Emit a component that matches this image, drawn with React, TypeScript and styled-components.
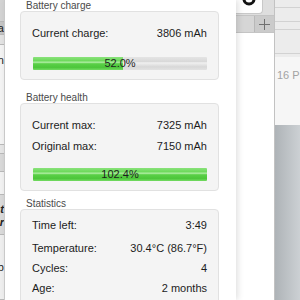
import React from 'react';
import styled, { createGlobalStyle } from 'styled-components';

const GlobalStyle = createGlobalStyle`
	html, body {
		margin: 0;
		padding: 0;
		background: #ffffff;
	}
`;

interface StatRow {
	label: string;
	value: string;
}

const stats: StatRow[] = [
	{ label: 'Time left:', value: '3:49' },
	{ label: 'Temperature:', value: '30.4°C (86.7°F)' },
	{ label: 'Cycles:', value: '4' },
	{ label: 'Age:', value: '2 months' },
];

const statGaps = [0, 9, 6, 6];

const ProgressBar = ({ percent, top }: { percent: number; top: number }) => (
	<Bar $mt={top}>
		<BarFill style={{ width: `${Math.min(percent, 100)}%` }} />
		<BarLabel>{percent.toFixed(1)}%</BarLabel>
	</Bar>
);

const App = () => {
	return (
		<>
			<GlobalStyle />
			<Page>
				<BackStrip>
					<StripCell $h={22} $bg="#d3d3d3" />
					<StripCell $h={13} $bg="#c5c5c5">Data</StripCell>
					<StripCell $h={10} $bg="#e3e3e3" />
					<StripCell $h={100} $bg="#f4f4f4" $pt={9}>
						Mon
					</StripCell>
					<StripCell $h={9} $bg="#e6e6e6" />
					<StripCell $h={18} $bg="#d9d9d9" />
					<StripCell $h={23} $bg="#f2f2f2" />
					<StripCell $h={40} $bg="#dadada" $pt={8} $italic>
						Last
						<br />
						Over
					</StripCell>
					<StripCell $h={65} $bg="#efefef" $pt={26}>
						Job
					</StripCell>
				</BackStrip>

				<Popover>
					<Section $mt={0}>
						<GroupTitle>Battery charge</GroupTitle>
						<GroupBox $pt={14}>
							<Row>
								<span>Current charge:</span>
								<span>3806 mAh</span>
							</Row>
							<ProgressBar percent={52.0} top={17} />
						</GroupBox>
					</Section>

					<Section $mt={12}>
						<GroupTitle>Battery health</GroupTitle>
						<GroupBox $pt={14}>
							<Row>
								<span>Current max:</span>
								<span>7325 mAh</span>
							</Row>
							<Row $mt={7}>
								<span>Original max:</span>
								<span>7150 mAh</span>
							</Row>
							<ProgressBar percent={102.4} top={15} />
						</GroupBox>
					</Section>

					<Section $mt={7}>
						<GroupTitle>Statistics</GroupTitle>
						<GroupBox $pt={8}>
							{stats.map((s, i) => (
								<Row key={s.label} $mt={statGaps[i]}>
									<span>{s.label}</span>
									<span>{s.value}</span>
								</Row>
							))}
						</GroupBox>
					</Section>
				</Popover>

				<RightPane>
					<MainCol>
						<TopStrip>
							<ToolButton>
								<svg width="16" height="10" viewBox="0 0 16 10">
									<circle cx="8" cy="-1" r="5" fill="none" stroke="#111" strokeWidth="3" />
								</svg>
							</ToolButton>
						</TopStrip>
						<TabBar>
							<AddTab>
								<svg width="11" height="11" viewBox="0 0 11 11">
									<path d="M5.5 0v11M0 5.5h11" stroke="#6f6f6f" strokeWidth="1" />
								</svg>
							</AddTab>
						</TabBar>
						<MainBody />
					</MainCol>
					<SideCol>
						<SideHead>
							<SideLine $h={7} />
							<SideLine $h={13} />
							<SideLine $h={7} />
							<SideLine $h={23} />
						</SideHead>
						<SideTime>16 PM</SideTime>
						<SideFoot />
					</SideCol>
				</RightPane>
			</Page>
		</>
	);
};

const Page = styled.div`
	display: flex;
	width: 300px;
	height: 300px;
	overflow: hidden;
	background: #ffffff;
	font-family: 'Liberation Sans', Arial, sans-serif;
`;

const BackStrip = styled.div`
	width: 4px;
	flex: none;
	display: flex;
	flex-direction: column;
	overflow: hidden;
	background: #ececec;
`;

const StripCell = styled.div<{ $h: number; $bg: string; $pt?: number; $italic?: boolean }>`
	height: ${(p) => p.$h}px;
	flex: none;
	box-sizing: border-box;
	padding-top: ${(p) => p.$pt || 0}px;
	background: ${(p) => p.$bg};
	border-bottom: 1px solid #b9b9b9;
	display: flex;
	justify-content: flex-end;
	font-size: 11px;
	line-height: 13px;
	font-style: ${(p) => (p.$italic ? 'italic' : 'normal')};
	font-weight: ${(p) => (p.$italic ? 'bold' : 'normal')};
	color: #222;
	white-space: nowrap;
	text-align: right;
`;

const Popover = styled.div`
	width: 232px;
	flex: none;
	box-sizing: border-box;
	padding: 0 17px 0 15px;
	background: #ffffff;
	border-left: 1px solid #c9c9c9;
	box-shadow: 2px 0 6px rgba(0, 0, 0, 0.12);
	position: relative;
	z-index: 1;
`;

const Section = styled.section<{ $mt: number }>`
	margin-top: ${(p) => p.$mt}px;
`;

const GroupTitle = styled.div`
	font-size: 10px;
	line-height: 11px;
	height: 11px;
	padding-left: 6px;
	color: #4a4a4a;
`;

const GroupBox = styled.div<{ $pt: number }>`
	display: flex;
	flex-direction: column;
	padding: ${(p) => p.$pt}px 11px 9px 11px;
	background: #f4f4f4;
	border: 1px solid #e1e1e1;
	border-radius: 4px;
`;

const Row = styled.div<{ $mt?: number }>`
	display: flex;
	justify-content: space-between;
	height: 14px;
	line-height: 14px;
	margin-top: ${(p) => p.$mt || 0}px;
	font-size: 11px;
	color: #1c1c1c;
	white-space: nowrap;
`;

const Bar = styled.div<{ $mt: number }>`
	position: relative;
	height: 13px;
	margin-top: ${(p) => p.$mt}px;
	margin-left: 1px;
	background: linear-gradient(
		to bottom,
		#e4e4e4 0%,
		#d9d9d9 35%,
		#f0f0f0 45%,
		#d8d8d8 75%,
		#e2e2e2 100%
	);
	border-radius: 1px;
	overflow: hidden;
`;

const BarFill = styled.div`
	height: 100%;
	background: linear-gradient(
		to bottom,
		#8ae27b 0%,
		#6cd95a 30%,
		#b4efa8 40%,
		#5ad047 52%,
		#4cc63a 80%,
		#74db63 100%
	);
`;

const BarLabel = styled.div`
	position: absolute;
	inset: 0;
	display: flex;
	align-items: center;
	justify-content: center;
	font-size: 11px;
	line-height: 13px;
	color: #1e1e1e;
`;

const RightPane = styled.div`
	flex: 1;
	display: flex;
`;

const MainCol = styled.div`
	width: 38px;
	flex: none;
	display: flex;
	flex-direction: column;
	background: #ffffff;
`;

const TopStrip = styled.div`
	height: 15px;
	flex: none;
	display: flex;
	background: #dedede;
`;

const ToolButton = styled.div`
	width: 27px;
	height: 14px;
	box-sizing: border-box;
	background: #fdfdfd;
	border: 1px solid #c8c8c8;
	border-top: none;
	border-left: none;
	border-radius: 0 0 4px 0;
	display: flex;
	justify-content: center;
	align-items: flex-start;
	overflow: hidden;
`;

const TabBar = styled.div`
	height: 18px;
	flex: none;
	display: flex;
	justify-content: flex-end;
	background: #d6d6d6;
	border-top: 1px solid #c4c4c4;
	border-bottom: 1px solid #c4c4c4;
	box-sizing: border-box;
`;

const AddTab = styled.div`
	width: 19px;
	display: flex;
	align-items: center;
	justify-content: center;
	background: #cbcbcb;
	border-left: 1px solid #b8b8b8;
`;

const MainBody = styled.div`
	flex: 1;
	background: #ffffff;
`;

const SideCol = styled.div`
	flex: 1;
	display: flex;
	flex-direction: column;
	border-left: 1px solid #c2c2c2;
	overflow: hidden;
`;

const SideHead = styled.div`
	height: 57px;
	flex: none;
	display: flex;
	flex-direction: column;
	background: #ececec;
`;

const SideLine = styled.div<{ $h: number }>`
	height: ${(p) => p.$h}px;
	flex: none;
	border-bottom: 1px solid #d2d2d2;
`;

const SideTime = styled.div`
	height: 68px;
	flex: none;
	box-sizing: border-box;
	padding: 12px 0 0 2px;
	background: #f6f6f6;
	font-size: 11px;
	line-height: 13px;
	color: #a3a3a3;
	white-space: nowrap;
`;

const SideFoot = styled.div`
	flex: 1;
	background: linear-gradient(to right, #aeb3b7, #d7dbde);
`;

export default App;
